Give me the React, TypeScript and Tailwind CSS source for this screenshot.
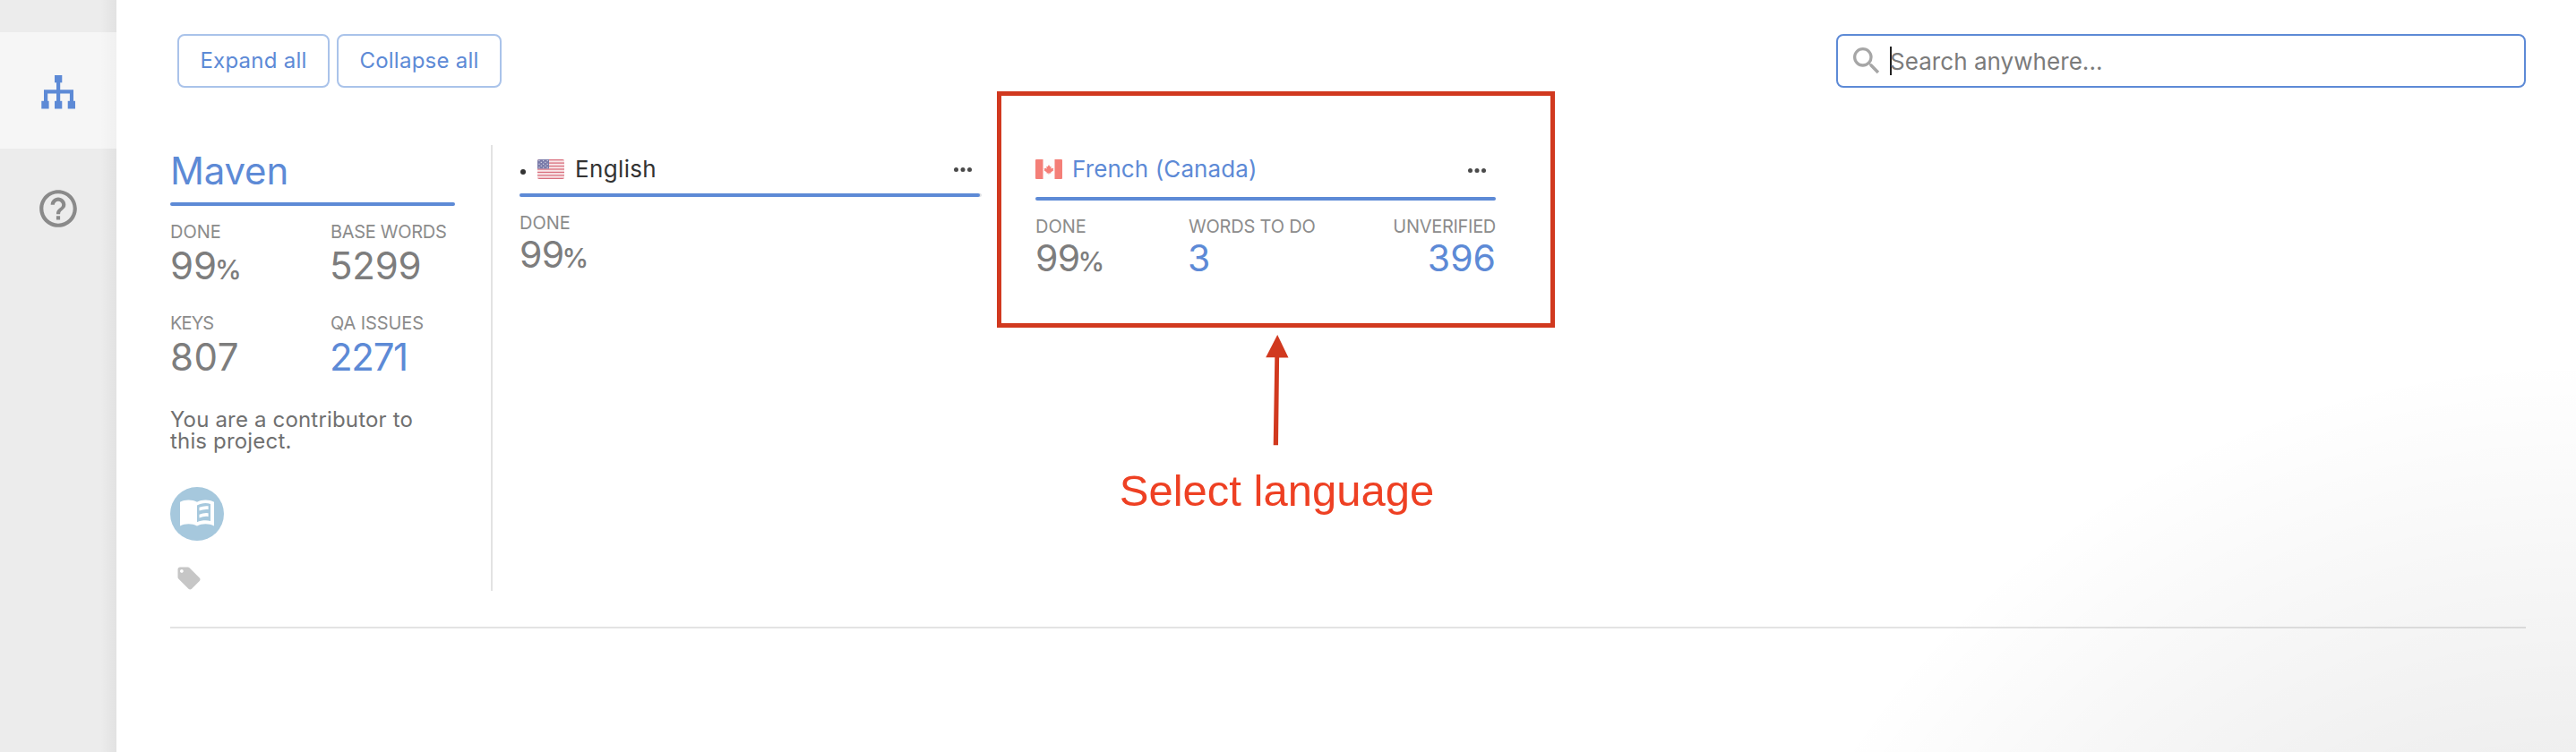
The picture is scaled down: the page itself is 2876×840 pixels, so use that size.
import type { ReactNode } from "react";
import { MdHelpOutline, MdLocalOffer, MdSearch } from "react-icons/md";

function SitemapIcon() {
  return (
    <svg width="38" height="38" viewBox="0 0 38 38" fill="#5d8ad6">
      <rect x="15" y="0" width="8.3" height="8.3" />
      <rect x="17" y="8" width="4.2" height="21" />
      <path d="M3 16.3h33v13h-4.1v-8.7H7.2v8.7H3z" />
      <rect x="0.3" y="28.8" width="8.3" height="8.7" />
      <rect x="15" y="28.8" width="8.3" height="8.7" />
      <rect x="29.7" y="28.8" width="8.3" height="8.7" />
    </svg>
  );
}

function BookIcon() {
  return (
    <svg width="38" height="30" viewBox="0 0 38 30">
      <path
        fill="#fff"
        fillRule="evenodd"
        d="M0 2.7C5.5-.3 13.5-.3 19 2.7C24.5-.3 32.5-.3 38 2.7V29.4C32.5 26.5 24.500 26.500 19 29.400C13.500 26.500 5.500 26.500 0 29.400ZM19 6.500V25.300C23.500 23.200 29.500 22.800 34 24V5C29.500 3.200 23.500 3.800 19 6.500Z"
      />
      <path fill="#fff" d="M21.500 8.800Q26.500 6.700 31.600 7.300V11.100Q26.500 10.500 21.500 12.500Z" />
      <path fill="#fff" d="M21.500 16.700Q26.500 14.600 31.600 15.200V19Q26.500 18.400 21.500 20.400Z" />
    </svg>
  );
}

const stripes = [0, 1, 2, 3, 4, 5, 6];
const stars = [0, 1, 2, 3, 4];

function FlagUS() {
  return (
    <svg className="rounded-[2px]" width="30" height="22" viewBox="0 0 30 22">
      <rect width="30" height="22" fill="#f8e6e8" />
      {stripes.map((i) => (
        <rect key={i} x="0" y={i * 3.45} width="30" height="1.3" fill="#d9717f" />
      ))}
      <rect width="13" height="10.5" fill="#7a7ba9" />
      {stars.map((r) =>
        stars.map((c) =>
          (r + c) % 2 === 0 ? (
            <rect key={`${r}-${c}`} x={1.4 + c * 2.3} y={0.9 + r * 1.9} width="1.2" height="1.2" fill="#d5d6e6" />
          ) : null,
        ),
      )}
    </svg>
  );
}

function FlagCA() {
  return (
    <svg className="rounded-[1px]" width="30" height="22" viewBox="0 0 30 22">
      <rect width="30" height="22" fill="#fdfdfd" />
      <rect width="8.5" height="22" fill="#f47f78" />
      <rect x="21.5" width="8.5" height="22" fill="#f47f78" />
      <path
        fill="#f47f78"
        d="M15 6l1.3 2.3 1.3-.6-.4 3 1.3-1.3.4.9 1.4-.3-.6 1.7.6.5-3.1 2.4.2 1-2.2-.2V17h-.5v-1.6l-2.200.2.2-1L9.600 12.200l.6-.5-.6-1.700 1.400.3.4-.9 1.300 1.300-.4-3 1.300.6z"
      />
    </svg>
  );
}

function Dots() {
  return (
    <svg width="20" height="5" viewBox="0 0 20 5" fill="#4a4a4a">
      <circle cx="2.5" cy="2.5" r="2.5" />
      <circle cx="10" cy="2.5" r="2.5" />
      <circle cx="17.5" cy="2.5" r="2.5" />
    </svg>
  );
}

function Label({ children, className = "" }: { children: ReactNode; className?: string }) {
  return <div className={`whitespace-nowrap text-[20px] leading-5 text-[#8c8c8c] ${className}`}>{children}</div>;
}

function Value({ children, className = "text-[42px]" }: { children: ReactNode; className?: string }) {
  return <div className={`h-[42px] whitespace-nowrap leading-[42px] ${className}`}>{children}</div>;
}

function Sidebar() {
  return (
    <aside className="flex w-[130px] shrink-0 flex-col bg-[#ececec] bg-[linear-gradient(to_left,rgba(0,0,0,0.045),rgba(0,0,0,0)_18px)] pt-9">
      <div className="flex h-[130px] items-center justify-center bg-white/50 pt-1">
        <SitemapIcon />
      </div>
      <div className="flex h-[134px] items-center justify-center">
        <MdHelpOutline size={50} color="#8a8a8a" />
      </div>
    </aside>
  );
}

function ProjectSummary() {
  return (
    <section className="w-[318px] pt-[9px]">
      <h1 className="text-[42px] leading-10 tracking-[-0.2px] text-[#5d8ad6]">Maven</h1>
      <div className="mt-[15px] h-1 rounded-full bg-[#5d8ad6]" />
      <div className="mt-[19px] grid grid-cols-[179px_1fr] gap-y-[33px]">
        <div className="flex flex-col gap-[7px]">
          <Label>DONE</Label>
          <Value className="text-[42px] text-[#7d7d7d]">
            99<span className="-ml-[2px] text-[30px] leading-0 font-medium">%</span>
          </Value>
        </div>
        <div className="flex flex-col gap-[7px]">
          <Label className="tracking-[-0.3px]">BASE WORDS</Label>
          <Value className="-ml-px text-[42px] tracking-[-0.2px] text-[#7d7d7d]">5299</Value>
        </div>
        <div className="flex flex-col gap-[7px]">
          <Label className="tracking-[-0.9px]">KEYS</Label>
          <Value className="text-[42px] tracking-[0.5px] text-[#7d7d7d]">807</Value>
        </div>
        <div className="flex flex-col gap-[7px]">
          <Label className="tracking-[-0.1px]">QA ISSUES</Label>
          <Value className="-ml-px text-[42px] tracking-[-1.3px] text-[#5d8ad6]">2271</Value>
        </div>
      </div>
      <p className="mt-[37px] text-2xl leading-6 tracking-[0.17px] text-[#707070]">
        You are a contributor to
        <br />
        this project.
      </p>
      <div className="mt-[39px] flex h-[60px] w-[60px] items-center justify-center rounded-full bg-[#a6c8dd] pb-[2px]">
        <BookIcon />
      </div>
      <div className="mt-[27px] pl-[6px]">
        <MdLocalOffer size={30} color="#c6c6c6" />
      </div>
    </section>
  );
}

function CardPercent() {
  return (
    <Value className="text-[41px] tracking-[-0.7px] text-[#7d7d7d]">
      99<span className="-ml-[2px] text-[30px] leading-0 font-medium">%</span>
    </Value>
  );
}

function EnglishCard() {
  return (
    <section className="ml-[30px] w-[516px] pt-3">
      <div className="flex h-[30px] items-center">
        <span className="mt-[6px] ml-[1px] h-[6px] w-[6px] rounded-full bg-[#333]" />
        <div className="ml-[13px]">
          <FlagUS />
        </div>
        <span className="ml-3 flex-1 text-[26px] leading-[30px] tracking-[0.35px] text-[#333]">English</span>
        <div className="mr-[11px]">
          <Dots />
        </div>
      </div>
      <div className="mt-3 h-1 rounded-full bg-[#dde0e5]">
        <div className="h-1 w-[514px] rounded-full bg-[#5d8ad6]" />
      </div>
      <div className="mt-[19px] flex flex-col gap-1">
        <Label>DONE</Label>
        <CardPercent />
      </div>
    </section>
  );
}

function FrenchCard() {
  return (
    <section className="ml-[60px] w-[514px] pt-3">
      <div className="flex h-[30px] items-center">
        <FlagCA />
        <span className="ml-[11px] flex-1 text-[26px] leading-[30px] tracking-[0.1px] text-[#5d8ad6]">
          French (Canada)
        </span>
        <div className="mt-[3px] mr-[11px]">
          <Dots />
        </div>
      </div>
      <div className="mt-4 h-1 rounded-full bg-[#5d8ad6]" />
      <div className="mt-[19px] flex">
        <div className="flex w-[171px] flex-col gap-1">
          <Label>DONE</Label>
          <CardPercent />
        </div>
        <div className="flex flex-1 flex-col gap-1">
          <Label className="tracking-[-0.2px]">WORDS TO DO</Label>
          <Value className="-ml-px text-[41px] text-[#5d8ad6]">3</Value>
        </div>
        <div className="flex flex-col items-end gap-1">
          <Label className="tracking-[-0.3px]">UNVERIFIED</Label>
          <Value className="text-[41px] text-[#5d8ad6]">396</Value>
        </div>
      </div>
    </section>
  );
}

function Annotation() {
  return (
    <div className="pointer-events-none absolute top-[102px] left-[1113px] flex w-[623px] flex-col items-center">
      <div className="h-[264px] w-full border-[5px] border-[#d1391f]" />
      <svg className="mt-2 ml-[3px]" width="26" height="124" viewBox="0 0 26 124" fill="#d1391f">
        <path d="M13.200 0L25.500 25.500 15.100 25.400 14 123.200H8.700L10.300 25.300 .2 25.200Z" />
      </svg>
      <span className="mt-[22px] ml-[2px] whitespace-nowrap font-['Liberation_Sans',sans-serif] text-[49px] leading-[56px] text-[#ee4023]">
        Select language
      </span>
    </div>
  );
}

const buttonClass =
  "flex h-[60px] items-center justify-center rounded-lg border-2 border-[#aac3ea] bg-white pb-px text-2xl text-[#5d8ad6] tracking-[0.25px]";

export default function App() {
  return (
    <div className="relative flex h-[840px] w-[2876px] overflow-hidden bg-white font-[Inter,sans-serif]">
      <Sidebar />
      <main className="flex flex-1 flex-col bg-[radial-gradient(circle_990px_at_100%_1390px,rgba(0,0,0,0.14),rgba(0,0,0,0))] pt-[38px] pr-14 pl-[60px]">
        <div className="flex h-[60px] justify-between pl-2">
          <div className="flex gap-2">
            <button className={`${buttonClass} w-[170px]`}>Expand all</button>
            <button className={`${buttonClass} w-[184px]`}>Collapse all</button>
          </div>
          <div className="flex h-[60px] w-[770px] items-center rounded-lg border-2 border-[#5d8ad6] bg-white pl-3">
            <MdSearch size={40} color="#a6a6a6" />
            <div className="ml-[6px] h-8 w-[2px] bg-[#222]" />
            <span className="-ml-[2px] pt-[2px] text-[26px] leading-[30px] tracking-[0.05px] text-[#7b7b7b]">
              Search anywhere...
            </span>
          </div>
        </div>
        <div className="mt-16 flex h-[498px]">
          <ProjectSummary />
          <div className="ml-10 w-[2px] bg-[#e3e3e3]" />
          <EnglishCard />
          <FrenchCard />
        </div>
        <div className="mt-10 h-[2px] bg-black/11" />
      </main>
      <Annotation />
    </div>
  );
}
